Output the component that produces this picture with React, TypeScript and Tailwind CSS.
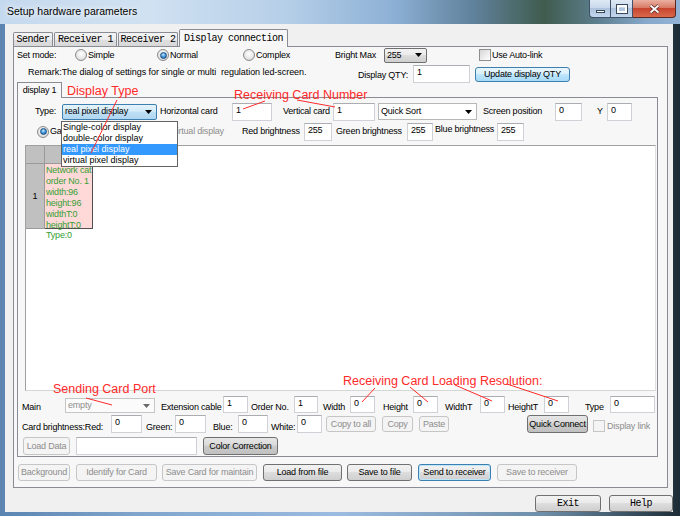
import clsx from "clsx";

const btnKinds = {
  normal:
    "border-[#707070] bg-[linear-gradient(#f2f2f2,#ebebeb_45%,#dddddd_50%,#cfcfcf)] text-black",
  dark: "border-[#707070] bg-[linear-gradient(#e6e6e6,#dadada_45%,#cbcbcb_50%,#c0c0c0)] text-black",
  focus:
    "border-[#3c7fb1] bg-[linear-gradient(#f2f2f2,#ebebeb_45%,#dddddd_50%,#cfcfcf)] text-black shadow-[inset_0_0_0_1px_#bfe6fb]",
  hot: "border-[#3c7fb1] bg-[linear-gradient(#eaf6fd,#d9f0fc_45%,#bee6fd_50%,#a7d9f5)] text-black",
  disabled: "border-[#c6c6c6] bg-[#f4f4f4] text-[#8d8d8d]",
};

type BtnKind = keyof typeof btnKinds;

function Btn({
  label,
  kind = "normal",
  className,
}: {
  label: string;
  kind?: BtnKind;
  className?: string;
}) {
  return (
    <div
      className={clsx(
        "flex shrink-0 items-center justify-center whitespace-nowrap rounded-[3px] border",
        btnKinds[kind],
        className
      )}
    >
      {label}
    </div>
  );
}

function Field({ value = "", className }: { value?: string; className?: string }) {
  return (
    <div
      className={clsx(
        "shrink-0 border border-[#cfd1d6] border-t-[#abadb3] bg-white pl-[3px] pt-[1px] text-black",
        className
      )}
    >
      {value}
    </div>
  );
}

function Arrow({ className }: { className?: string }) {
  return (
    <svg viewBox="0 0 7 4" className={clsx("h-[4px] w-[7px] fill-current", className)}>
      <path d="M0 0h7L3.5 4z" />
    </svg>
  );
}

const comboKinds = {
  button:
    "rounded-[2px] border-[#707070] bg-[linear-gradient(#f2f2f2,#ebebeb_45%,#dddddd_50%,#cfcfcf)]",
  focus:
    "rounded-[2px] border-[#3c7fb1] bg-[linear-gradient(#e5f3fb,#d2ebf9_45%,#bfe0f6_50%,#b0d6f1)]",
  edit: "border-[#b8b8b8] bg-white",
  disabled: "border-[#c6c6c6] bg-[#fbfbfb] text-[#8d8d8d]",
};

function Combo({
  value,
  kind,
  className,
}: {
  value: string;
  kind: keyof typeof comboKinds;
  className?: string;
}) {
  return (
    <div
      className={clsx(
        "flex shrink-0 items-center justify-between border pl-[2px] pr-[4px]",
        comboKinds[kind],
        className
      )}
    >
      <span>{value}</span>
      <Arrow className={kind === "disabled" ? "text-[#6a6a6a]" : "text-black"} />
    </div>
  );
}

function Radio({ checked }: { checked?: boolean }) {
  return (
    <span className="flex h-[12px] w-[12px] shrink-0 items-center justify-center rounded-full border border-[#8b8b8b] bg-[radial-gradient(circle_at_50%_40%,#ffffff,#e6e6e6_60%,#c8c8c8)]">
      {checked && (
        <span className="h-[7px] w-[7px] rounded-full border border-[#1d5280] bg-[radial-gradient(circle_at_45%_35%,#c2e8ff,#3b8fd6_55%,#0f4f8f)]" />
      )}
    </span>
  );
}

function Check({ disabled }: { disabled?: boolean }) {
  return (
    <span
      className={clsx(
        "h-[12px] w-[12px] shrink-0 border",
        disabled
          ? "border-[#c6c6c6] bg-[#f4f4f4]"
          : "border-[#8e8f8f] bg-[linear-gradient(135deg,#d6d6d6,#ffffff)]"
      )}
    />
  );
}

function Label({ text, className }: { text: string; className?: string }) {
  return <div className={clsx("shrink-0 whitespace-nowrap", className)}>{text}</div>;
}

const cellLines = ["Network cat", "order No. 1", "width:96", "height:96", "widthT:0", "heightT:0"];

function TitleBar() {
  return (
    <div className="flex h-[24px] items-start bg-[linear-gradient(90deg,#c5d9ee,#d0e1f2_22%,#b6cfe8_42%,#8cb0d5_58%,#5f8099_70%,#3f5c4e_80%,#5e7f8f_88%,#86a8ca_95%,#93b4d6)]">
      <div className="pl-[7px] pt-[5px] text-[10.5px] leading-[13px] tracking-normal [text-shadow:0_0_5px_#fff,0_0_9px_#fff]">
        Setup hardware parameters
      </div>
      <div className="ml-auto mr-[4px] flex">
        <div className="flex h-[18px] w-[22px] items-end justify-center rounded-bl-[4px] border border-t-0 border-[#3f526a] bg-[linear-gradient(#dfe9f5,#c9d9ec_45%,#aec4de_50%,#c2d6ec)] pb-[4px]">
          <span className="h-[3px] w-[9px] border border-[#36475a] bg-white" />
        </div>
        <div className="flex h-[18px] w-[22px] items-center justify-center border border-l-0 border-t-0 border-[#3f526a] bg-[linear-gradient(#dfe9f5,#c9d9ec_45%,#aec4de_50%,#c2d6ec)]">
          <span className="h-[8px] w-[10px] border-2 border-white outline outline-1 outline-[#36475a]" />
        </div>
        <div className="flex h-[18px] w-[43px] items-center justify-center rounded-br-[4px] border border-l-0 border-t-0 border-[#5a2a22] bg-[linear-gradient(#eab0a2,#d87b66_45%,#c7452f_50%,#d9694d)]">
          <svg viewBox="0 0 11 10" className="h-[10px] w-[11px]">
            <path d="M1.5 1.5l8 7M9.5 1.5l-8 7" stroke="#5a2020" strokeWidth="3.2" />
            <path d="M1.5 1.5l8 7M9.5 1.5l-8 7" stroke="#fff" strokeWidth="1.8" />
          </svg>
        </div>
      </div>
    </div>
  );
}

function GridPanel() {
  return (
    <div className="ml-[7px] mt-[4px] h-[246px] w-[631px] shrink-0 border border-[#a0a0a0] border-b-[#d6d6d6] border-r-[#e0e0e0] bg-white">
      <div className="flex">
        <div className="h-[18px] w-[19px] border-b border-r border-[#9a9a9a] bg-[#c0c0c0]" />
        <div className="h-[18px] w-[48px] border-b border-r border-[#9a9a9a] bg-[#c0c0c0]" />
      </div>
      <div className="flex">
        <div className="flex h-[65px] w-[19px] items-center justify-center border-b border-r border-[#9a9a9a] bg-[#c0c0c0]">
          1
        </div>
        <div className="h-[65px] w-[48px] whitespace-nowrap border-b border-r border-[#505050] bg-[#ffd8d8] pl-[1px] pt-[1px] text-[#35a035]">
          {cellLines.map((l) => (
            <div key={l} className="h-[11px]">
              {l}
            </div>
          ))}
        </div>
      </div>
      <div className="mt-[1px] pl-[20px] text-[#35a035]">Type:0</div>
    </div>
  );
}

function InnerPage() {
  return (
    <div className="ml-[3px] flex h-[360px] w-[641px] flex-col border border-[#898c95] bg-[#f7f7f7]">
      {/* type row */}
      <div className="mt-[4px] flex h-[19px] items-center">
        <Label text="Type:" className="w-[44px] pl-[17px]" />
        <Combo value="real pixel display" kind="focus" className="h-[16px] w-[95px]" />
        <Label text="Horizontal card" className="ml-[3px] w-[72px]" />
        <Field value="1" className="h-[18px] w-[40px]" />
        <Label text="Vertical card" className="w-[61px] pl-[11px]" />
        <Field value="1" className="h-[18px] w-[42px]" />
        <Combo value="Quick Sort" kind="edit" className="ml-[3px] h-[17px] w-[99px]" />
        <Label text="Screen position" className="ml-[6px] w-[72px]" />
        <Field value="0" className="h-[18px] w-[27px]" />
        <Label text="Y" className="w-[25px] pl-[15px]" />
        <Field value="0" className="h-[18px] w-[25px]" />
      </div>
      {/* radio row */}
      <div className="mt-[1px] flex h-[19px] items-center">
        <div className="flex w-[153px] items-center gap-[1px] pl-[19px]">
          <Radio checked />
          <span>Gang</span>
        </div>
        <Label text="Virtual display" className="w-[71px] text-[#8d8d8d]" />
        <Label text="Red brightness" className="w-[62px]" />
        <Field value="255" className="h-[18px] w-[28px]" />
        <Label text="Green brightness" className="ml-[4px] w-[71px]" />
        <Field value="255" className="h-[18px] w-[26px]" />
        <Label text="Blue brightness" className="mb-[5px] ml-[2px] w-[62px]" />
        <Field value="255" className="h-[18px] w-[27px]" />
      </div>
      <GridPanel />
      {/* main row */}
      <div className="mt-[4px] flex h-[18px] items-end">
        <Label text="Main" className="w-[47px] pl-[4px]" />
        <Combo value="empty" kind="disabled" className="h-[15px] w-[90px]" />
        <Label text="Extension cable" className="ml-[6px] w-[62px]" />
        <Field value="1" className="h-[17px] w-[25px]" />
        <Label text="Order No." className="ml-[3px] w-[43px]" />
        <Field value="1" className="h-[17px] w-[24px]" />
        <Label text="Width" className="ml-[5px] w-[27px]" />
        <Field value="0" className="h-[17px] w-[25px]" />
        <Label text="Height" className="ml-[8px] w-[30px]" />
        <Field value="0" className="h-[17px] w-[25px]" />
        <Label text="WidthT" className="ml-[7px] w-[35px]" />
        <Field value="0" className="h-[17px] w-[25px]" />
        <Label text="HeightT" className="ml-[3px] w-[36px]" />
        <Field value="0" className="h-[17px] w-[25px]" />
        <Label text="Type" className="ml-[16px] w-[25px]" />
        <Field value="0" className="h-[17px] w-[45px]" />
      </div>
      {/* brightness row */}
      <div className="mt-[2px] flex h-[18px] items-end">
        <Label text="Card brightness:Red:" className="w-[93px] pl-[4px]" />
        <Field value="0" className="h-[18px] w-[31px]" />
        <Label text="Green:" className="ml-[4px] w-[29px]" />
        <Field value="0" className="h-[18px] w-[31px]" />
        <Label text="Blue:" className="ml-[7px] w-[25px]" />
        <Field value="0" className="h-[18px] w-[30px]" />
        <Label text="White:" className="ml-[3px] w-[26px]" />
        <Field value="0" className="h-[18px] w-[25px]" />
        <Btn label="Copy to all" kind="disabled" className="mb-[1px] ml-[4px] h-[16px] w-[50px]" />
        <Btn label="Copy" kind="disabled" className="mb-[1px] ml-[6px] h-[16px] w-[31px]" />
        <Btn label="Paste" kind="disabled" className="mb-[1px] ml-[6px] h-[16px] w-[30px]" />
        <Btn label="Quick Connect" kind="dark" className="ml-[78px] h-[18px] w-[61px]" />
        <div className="ml-[5px] flex items-center gap-[2px] self-center pt-[4px]">
          <Check disabled />
          <span className="text-[#8d8d8d]">Display link</span>
        </div>
      </div>
      {/* load data row */}
      <div className="mt-[4px] flex h-[18px] items-center">
        <Btn label="Load Data" kind="disabled" className="ml-[5px] h-[18px] w-[47px]" />
        <Field className="ml-[6px] h-[18px] w-[121px]" />
        <Btn label="Color Correction" kind="dark" className="ml-[6px] h-[18px] w-[75px]" />
      </div>
    </div>
  );
}

function Page() {
  return (
    <div className="ml-[8px] flex h-[442px] w-[655px] flex-col border border-[#898c95] bg-[#f7f7f7]">
      <div className="flex h-[16px] items-center">
        <Label text="Set mode:" className="w-[61px] pl-[3px]" />
        <div className="flex w-[82px] items-center gap-[1px]">
          <Radio />
          <span>Simple</span>
        </div>
        <div className="flex w-[86px] items-center gap-[1px]">
          <Radio checked />
          <span>Normal</span>
        </div>
        <div className="flex w-[92px] items-center gap-[1px]">
          <Radio />
          <span>Complex</span>
        </div>
        <Label text="Bright Max" className="w-[49px]" />
        <Combo value="255" kind="button" className="h-[15px] w-[43px]" />
        <div className="ml-[52px] flex items-center gap-[1px]">
          <Check />
          <span>Use Auto-link</span>
        </div>
      </div>
      <div className="mt-[2px] flex h-[18px] items-center">
        <div className="flex w-[399px] shrink-0 justify-between pl-[14px]">
          <span className="whitespace-nowrap tracking-[-0.05px]">
            Remark:The dialog of settings for single or multi&nbsp; regulation led-screen.
          </span>
          <span className="mt-[3px] pr-[5px]">Display QTY:</span>
        </div>
        <Field value="1" className="h-[18px] w-[57px]" />
        <Btn label="Update display QTY" kind="hot" className="ml-[5px] h-[15px] w-[95px]" />
      </div>
      <div className="relative z-10 -mb-[1px] ml-[3px] mt-[-1px] flex h-[16px] w-[45px] items-center justify-center border border-b-0 border-[#898c95] bg-[#f7f7f7]">
        display 1
      </div>
      <InnerPage />
      <div className="mt-[7px] flex h-[17px] items-center">
        <Btn label="Background" kind="disabled" className="ml-[4px] h-[17px] w-[52px]" />
        <Btn label="Identify for Card" kind="disabled" className="ml-[6px] h-[17px] w-[81px]" />
        <Btn label="Save Card for maintain" kind="disabled" className="ml-[5px] h-[17px] w-[95px]" />
        <Btn label="Load from file" className="ml-[6px] h-[17px] w-[79px]" />
        <Btn label="Save to file" className="ml-[5px] h-[17px] w-[65px]" />
        <Btn label="Send to receiver" kind="focus" className="ml-[6px] h-[17px] w-[73px]" />
        <Btn label="Save to receiver" kind="disabled" className="ml-[6px] h-[17px] w-[80px]" />
      </div>
    </div>
  );
}

const tabs = [
  { label: "Sender", w: "w-[40px]" },
  { label: "Receiver 1", w: "w-[63px]" },
  { label: "Receiver 2", w: "w-[60px]" },
];

export default function App() {
  return (
    <div className="relative h-[516px] w-[680px] overflow-hidden bg-[linear-gradient(90deg,#5b84b1,#7fa5cc_20%,#9bbbe0_50%,#6d8ea8_80%,#1c2c36)] font-['Liberation_Sans',Arial,sans-serif] text-[9px] leading-[11px] tracking-[-0.2px] text-black">
      <TitleBar />
      <div className="ml-[5px] flex h-[488px] w-[668px] flex-col bg-[#f0f0f0]">
        <div className="flex h-[22px] items-end pl-[8px] font-['Liberation_Mono',monospace] text-[10px] tracking-[-0.5px]">
          {tabs.map((t) => (
            <div
              key={t.label}
              className={clsx(
                "mr-[1px] flex h-[14px] items-center justify-center rounded-t-[2px] border border-b-0 border-[#898c95] bg-[linear-gradient(#f4f4f4,#ececec_50%,#e0e0e0_50%,#d8d8d8)]",
                t.w
              )}
            >
              {t.label}
            </div>
          ))}
          <div className="relative z-10 -mb-[1px] flex h-[18px] w-[109px] items-center justify-center rounded-t-[2px] border border-b-0 border-[#898c95] bg-[#f7f7f7]">
            Display connection
          </div>
        </div>
        <Page />
        <div className="mt-[7px] flex justify-end gap-[8px] font-['Liberation_Mono',monospace] text-[10px] tracking-[-0.5px]">
          <Btn label="Exit" className="h-[17px] w-[66px]" />
          <Btn label="Help" className="h-[17px] w-[64px]" />
        </div>
      </div>

      {/* open type list */}
      <div className="absolute left-[61px] top-[121px] z-20 h-[46px] w-[117px] border border-[#646464] bg-white tracking-normal">
        <div className="h-[11px] pl-[1px]">Single-color display</div>
        <div className="h-[11px] pl-[1px]">double-color display</div>
        <div className="h-[11px] bg-[#3399ff] pl-[1px] text-white">real pixel display</div>
        <div className="h-[11px] pl-[1px]">virtual pixel display</div>
      </div>

      {/* annotations */}
      <div className="absolute left-[67px] top-[85px] z-30 whitespace-nowrap text-[12.5px] leading-none tracking-normal text-[#ff2a2a]">
        Display Type
      </div>
      <div className="absolute left-[234px] top-[89px] z-30 whitespace-nowrap text-[12.5px] leading-none tracking-normal text-[#ff2a2a]">
        Receiving Card Number
      </div>
      <div className="absolute left-[53px] top-[383px] z-30 whitespace-nowrap text-[12.5px] leading-none tracking-normal text-[#ff2a2a]">
        Sending Card Port
      </div>
      <div className="absolute left-[343px] top-[375px] z-30 whitespace-nowrap text-[12.5px] leading-none tracking-normal text-[#ff2a2a]">
        Receiving Card Loading Resolution:
      </div>
      <svg className="pointer-events-none absolute left-0 top-0 z-30 h-[516px] w-[680px]" viewBox="0 0 680 516">
        <g stroke="#ff2a2a" strokeWidth="1" fill="none">
          <path d="M117 100L91 153" />
          <path d="M265 101L243 109" />
          <path d="M297 100L335 107" />
          <path d="M86 398L112 405" />
          <path d="M375 388L362 402" />
          <path d="M410 387L428 402" />
          <path d="M455 385L492 401" />
          <path d="M507 384L558 401" />
        </g>
      </svg>
    </div>
  );
}
